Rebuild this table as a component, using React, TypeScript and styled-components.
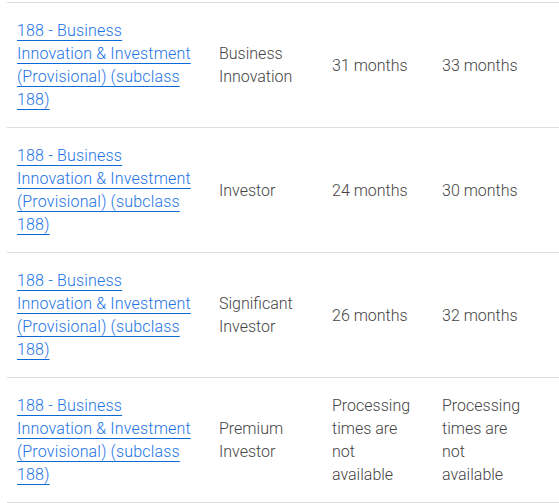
import React from "react";
import styled, { createGlobalStyle } from "styled-components";

const Global = createGlobalStyle`
  html, body { margin: 0; padding: 0; background: #fff; overflow: hidden; }
  body { font-family: Roboto, "Open Sans", Arial, sans-serif; }
`;

const Wrap = styled.div`
  padding: 2px 0 0 7px;
`;

const Table = styled.table`
  border-collapse: collapse;
  table-layout: fixed;
  width: 552px;
  font-family: Roboto, Arial, sans-serif;
  font-size: 16px;
  line-height: 23px;
  color: #444;
`;

const Row = styled.tr`
  border-top: 1px solid #ddd;
  border-bottom: 1px solid #ddd;
`;

const Cell = styled.td<{ $padRight?: number }>`
  padding: 16px ${(p) => p.$padRight ?? 16}px 16px 10px;
  height: 92px;
  vertical-align: middle;
  font-weight: 300;
`;

const VisaLink = styled.a`
  color: #1a73e8;
  text-decoration: underline;
  text-decoration-color: #0b6ad6;
  text-underline-offset: 4px;
  text-decoration-thickness: 1px;
  font-weight: 300;
  letter-spacing: 0.18px;
`;

const rows = [
  { stream: "Business Innovation", p1: "31 months", p2: "33 months" },
  { stream: "Investor", p1: "24 months", p2: "30 months" },
  { stream: "Significant Investor", p1: "26 months", p2: "32 months" },
  {
    stream: "Premium Investor",
    p1: "Processing times are not available",
    p2: "Processing times are not available",
  },
];

export default function App() {
  return (
    <>
      <Global />
      <Wrap>
        <Table>
          <colgroup>
            <col style={{ width: 202 }} />
            <col style={{ width: 113 }} />
            <col style={{ width: 110 }} />
            <col style={{ width: 127 }} />
          </colgroup>
          <tbody>
            {rows.map((r, i) => (
              <Row key={i}>
                <Cell>
                  <VisaLink href="#">
                    188 - Business Innovation &amp; Investment (Provisional) (subclass 188)
                  </VisaLink>
                </Cell>
                <Cell>{r.stream}</Cell>
                <Cell>{r.p1}</Cell>
                <Cell $padRight={40}>{r.p2}</Cell>
              </Row>
            ))}
          </tbody>
        </Table>
      </Wrap>
    </>
  );
}
